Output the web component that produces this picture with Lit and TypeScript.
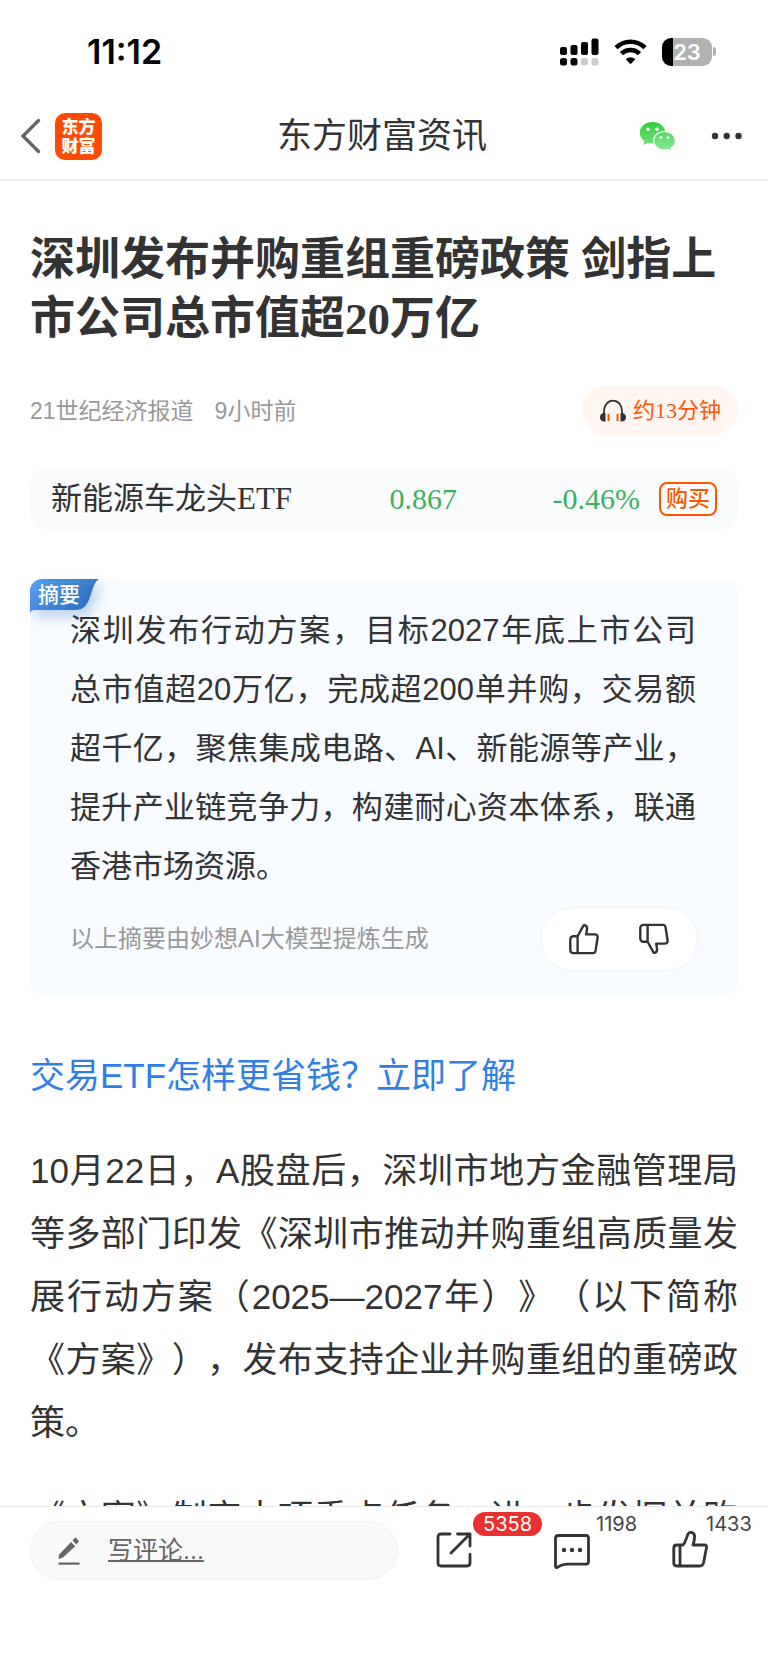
import { LitElement, html, css, svg } from "lit";
import { customElement, property } from "lit/decorators.js";

const thumb = svg`
  <path d="M10.5 14.5 16.6 3.4c.5-1 1.7-1.3 2.6-.7 1.500 1 1.900 2.600 1.600 4.300l-.9 5.500h9.600c1.900 0 3.200 1.600 2.900 3.400l-2.300 14.600c-.3 1.600-1.400 2.500-2.900 2.500H6c-2 0-3.500-1.500-3.500-3.500V18c0-2 1.500-3.500 3.500-3.500zM10.500 14.500V33"></path>`;

@customElement("status-bar")
class StatusBar extends LitElement {
  static styles = css`
    :host {
      display: flex;
      align-items: center;
      justify-content: space-between;
      height: 90px;
      padding: 13px 52px 0 87px;
      box-sizing: border-box;
      font-family: Inter, "Liberation Sans", sans-serif;
    }
    .time { font-size: 34px; line-height: 40px; font-weight: 600; color: #000; }
    .icons { display: flex; align-items: center; gap: 15px; }
    .battery {
      display: flex;
      align-items: center;
      gap: 1px;
    }
    .cell {
      width: 50px;
      height: 28px;
      border-radius: 9px;
      background: linear-gradient(90deg, #000 11px, #b1b1b1 11px);
      color: #fff;
      font-size: 22px;
      line-height: 28px;
      font-weight: 600;
      text-align: center;
    }
    .tip { width: 3px; height: 9px; border-radius: 0 4px 4px 0; background: #b1b1b1; }
  `;
  render() {
    return html`
      <span class="time">11:12</span>
      <div class="icons">
        <svg width="39" height="28" viewBox="0 0 39 28" aria-hidden="true">
          <rect x="0" y="9" width="7" height="8" rx="2"></rect>
          <rect x="10.500" y="7" width="7" height="10" rx="2"></rect>
          <rect x="21" y="4" width="7" height="13" rx="2"></rect>
          <rect x="31.500" y="0.500" width="7" height="16.500" rx="2"></rect>
          <rect x="0" y="20" width="7" height="7.500" rx="2.500"></rect>
          <rect x="10.500" y="20" width="7" height="7.500" rx="2.500"></rect>
          <rect x="21" y="20" width="7" height="7.500" rx="2.500" fill="#ccc"></rect>
          <rect x="31.500" y="20" width="7" height="7.500" rx="2.500" fill="#ccc"></rect>
        </svg>
        <svg width="33" height="26" viewBox="0 0 33 26" aria-hidden="true">
          <path d="M2 8.600a20.800 20.800 0 0 1 29 0" fill="none" stroke="#000" stroke-width="4.600"></path>
          <path d="M7.500 14.600a13 13 0 0 1 18 0" fill="none" stroke="#000" stroke-width="4.600"></path>
          <path d="M16.500 25.200 11.700 20.300a6.900 6.900 0 0 1 9.600 0z"></path>
        </svg>
        <div class="battery"><span class="cell">23</span><span class="tip"></span></div>
      </div>
    `;
  }
}

@customElement("nav-bar")
class NavBar extends LitElement {
  static styles = css`
    :host {
      display: grid;
      grid-template-columns: 1fr auto 1fr;
      align-items: center;
      height: 91px;
      padding: 3px 24px 0 20px;
      box-sizing: border-box;
      border-bottom: 2px solid #eee;
    }
    .side { display: flex; align-items: center; gap: 14px; }
    .end { justify-content: flex-end; gap: 34px; }
    button { display: flex; padding: 0; border: 0; background: none; }
    h2 { margin: 0; font-size: 35px; line-height: 48px; font-weight: 400; color: #333; }
    .logo {
      width: 47px;
      height: 47px;
      padding-top: 5px;
      box-sizing: border-box;
      border-radius: 10px;
      background: #ff4a04;
      color: #fff;
      font-size: 17px;
      line-height: 19px;
      font-weight: 900;
      text-align: center;
      text-decoration: none;
    }
  `;
  render() {
    return html`
      <div class="side">
        <button aria-label="返回">
          <svg width="21" height="36" viewBox="0 0 21 36"><path d="M18.500 2.500 3 18 18.500 33.500" fill="none" stroke="#666" stroke-width="3.400" stroke-linecap="round"></path></svg>
        </button>
        <a class="logo" href="#">东方<br />财富</a>
      </div>
      <h2>东方财富资讯</h2>
      <div class="side end">
        <button aria-label="微信">
          <svg width="37" height="30" viewBox="0 0 37 30">
            <defs><linearGradient id="wx" x1="0" y1="0" x2="0" y2="1"><stop offset="0" stop-color="#2fcf3d"></stop><stop offset="1" stop-color="#6fe07a"></stop></linearGradient>
            <linearGradient id="wy" x1="0" y1="0" x2="0" y2="1"><stop offset="0" stop-color="#58d764"></stop><stop offset="1" stop-color="#8aea94"></stop></linearGradient></defs>
            <path d="M13.500 1C6.300 1 .8 5.700.8 11.800c0 3.500 1.800 6.400 4.700 8.300L4.300 24l4.800-2.200c1.400.4 2.900.6 4.400.6 7.200 0 12.800-4.600 12.800-10.600S20.700 1 13.500 1z" fill="url(#wx)"></path>
            <path d="M25.500 10.300c-6.100 0-11 4.200-11 9.500s4.900 9.400 11 9.400c1.200 0 2.400-.2 3.500-.5l3.900 2-.9-3.500c2.700-1.700 4.400-4.400 4.400-7.400 0-5.300-4.800-9.500-10.900-9.500z" fill="url(#wy)" stroke="#fff" stroke-width="1.200"></path>
            <g fill="#fff"><circle cx="9" cy="8.200" r="1.800"></circle><circle cx="18" cy="8.200" r="1.800"></circle><circle cx="22" cy="16.600" r="1.400"></circle><circle cx="29" cy="16.600" r="1.400"></circle></g>
          </svg>
        </button>
        <button aria-label="更多">
          <svg width="34" height="10" viewBox="0 0 34 10" fill="#333"><circle cx="5" cy="5" r="3.200"></circle><circle cx="16.700" cy="5" r="3.200"></circle><circle cx="28.500" cy="5" r="3.200"></circle></svg>
        </button>
      </div>
    `;
  }
}

@customElement("summary-card")
class SummaryCard extends LitElement {
  static styles = css`
    :host {
      display: block;
      position: relative;
      margin-top: 49px;
      padding: 22px 40px 24px;
      border-radius: 14px;
      background: #f8fbff;
    }
    .tag { position: absolute; left: 0; top: 0; width: 70px; height: 34px; }
    .shape { position: absolute; left: 0; top: 0; overflow: visible; }
    .label { position: relative; display: block; padding-left: 8px; font-size: 21px; line-height: 31px; font-weight: 500; color: #fff; }
    p { margin: 0; padding-right: 2px; position: relative; font-size: 31px; line-height: 59px; text-align: justify; color: #333; }
    .foot { display: flex; align-items: center; justify-content: space-between; margin-top: 11px; }
    .note { font-size: 24px; line-height: 32px; color: #999; }
    .votes {
      display: flex;
      align-items: center;
      justify-content: space-between;
      width: 158px;
      height: 64px;
      padding: 0 27px;
      box-sizing: border-box;
      border: 1px solid #f1f2f4;
      border-radius: 32px;
      background: #fff;
    }
    button { display: flex; padding: 0; border: 0; background: none; }
    .down { transform: scaleY(-1); }
  `;
  render() {
    return html`
      <div class="tag">
        <svg class="shape" width="70" height="34" viewBox="0 0 70 34" aria-hidden="true">
          <defs>
            <linearGradient id="tg" x1="0" y1="0" x2="1" y2="0.500"><stop offset="0" stop-color="#5b9ff0"></stop><stop offset="1" stop-color="#2e6fc0"></stop></linearGradient>
            <filter id="sh" x="-20%" y="-20%" width="160%" height="200%"><feDropShadow dx="5" dy="7" stdDeviation="6" flood-color="#3a7bd0" flood-opacity="0.300"></feDropShadow></filter>
          </defs>
          <path d="M0 34V12A12 12 0 0 1 12 0H69C64 3 63 10 60 18 57 27 53 31 45 31H5Q1 31 0 34z" fill="url(#tg)" filter="url(#sh)"></path>
        </svg>
        <span class="label">摘要</span>
      </div>
      <p>深圳发布行动方案，目标2027年底上市公司总市值超20万亿，完成超200单并购，交易额超千亿，聚焦集成电路、AI、新能源等产业，提升产业链竞争力，构建耐心资本体系，联通香港市场资源。</p>
      <div class="foot">
        <span class="note">以上摘要由妙想AI大模型提炼生成</span>
        <div class="votes">
          <button aria-label="赞"><svg width="32" height="32" viewBox="0 0 35 35" fill="none" stroke="#333" stroke-width="2.600" stroke-linejoin="round">${thumb}</svg></button>
          <button aria-label="踩"><svg class="down" width="32" height="32" viewBox="0 0 35 35" fill="none" stroke="#333" stroke-width="2.600" stroke-linejoin="round">${thumb}</svg></button>
        </div>
      </div>
    `;
  }
}

@customElement("action-button")
class ActionButton extends LitElement {
  @property() name = "";
  @property() count = "";
  @property() variant = "";
  static styles = css`
    :host { display: block; }
    button { position: relative; display: flex; padding: 0; border: 0; background: none; }
    .count {
      position: absolute;
      left: 42px;
      top: -19px;
      color: #444;
      font: 400 20px/24px Inter, "Liberation Sans", sans-serif;
    }
    .hot { left: 37px; padding: 0 10px; border-radius: 12px; background: #e93030; color: #fff; }
    .near { left: 34px; }
  `;
  render() {
    return html`<button aria-label=${this.name}><slot></slot><span class="count ${this.variant}">${this.count}</span></button>`;
  }
}

@customElement("comment-bar")
class CommentBar extends LitElement {
  static styles = css`
    :host {
      display: flex;
      align-items: flex-start;
      gap: 38px;
      height: 157px;
      padding: 14px 60px 0 30px;
      box-sizing: border-box;
      border-top: 1px solid #ebebeb;
      background: #fff;
      flex: none;
    }
    .field {
      flex: 1;
      min-width: 0;
      display: flex;
      align-items: center;
      gap: 28px;
      height: 59px;
      padding: 0 27px;
      box-sizing: border-box;
      border: 1px solid #f0f0f0;
      border-radius: 30px;
      background: #f9f9f9;
    }
    .field svg { flex: none; }
    input {
      flex: 1;
      min-width: 0;
      padding: 0;
      border: 0;
      outline: 0;
      background: none;
      height: 40px;
      font-family: inherit;
      font-size: 25px;
      color: #333;
    }
    input::placeholder { color: #666; opacity: 1; text-decoration: underline 2px; }
    .actions { display: flex; gap: 82px; padding-top: 10px; }
  `;
  render() {
    return html`
      <label class="field">
        <svg width="22" height="30" viewBox="0 0 22 30" fill="#666" aria-hidden="true">
          <path d="M0.500 23 1.200 18.400 13 6 17.200 10.200 5 21.600z"></path>
          <path d="M14.500 4.600 17.300 1.200 21 5.200 18.300 8.600z"></path>
          <rect x="0.500" y="26.500" width="21" height="2.200"></rect>
        </svg>
        <input type="text" placeholder="写评论..." aria-label="写评论" />
      </label>
      <div class="actions">
        <action-button name="分享" count="5358" variant="hot">
          <svg width="36" height="38" viewBox="0 0 36 38" fill="none" stroke="#333" stroke-width="2.800" stroke-linecap="round" stroke-linejoin="round">
            <path d="M14 3H5Q2 3 2 6V32Q2 35 5 35H31Q34 35 34 32V23.500M21.500 3H34V15M33.500 3.500 15 22"></path>
          </svg>
        </action-button>
        <action-button name="评论" count="1198">
          <svg width="36" height="38" viewBox="0 0 36 38" fill="none" stroke="#333" stroke-width="2.800" stroke-linejoin="round">
            <path d="M4.500 4.500H32Q34.500 4.500 34.500 7.200V30.500Q34.500 33.200 32 33.200H12.500C8 33.200 6 34.500 3 36.500Q1.500 37 1.500 35V7.500Q1.500 4.500 4.500 4.500z"></path>
            <g fill="#333" stroke="none"><circle cx="10" cy="19" r="2.200"></circle><circle cx="18" cy="19" r="2.200"></circle><circle cx="26" cy="19" r="2.200"></circle></g>
          </svg>
        </action-button>
        <action-button name="点赞" count="1433" variant="near">
          <svg width="36" height="38" viewBox="0 0 36 38" fill="none" stroke="#333" stroke-width="2.800" stroke-linejoin="round">
            <path d="M11 14C14 11 14.500 6 16 3 17.500.5 22.500.8 22.600 5.200 22.600 8.500 22 11 21 14H32.500Q35 14 34.500 16.500L31.500 32Q30.700 35 28 35H5Q1.800 35 1.800 32V17Q1.800 14 5 14zM8 14V35"></path>
          </svg>
        </action-button>
      </div>
    `;
  }
}

@customElement("app-root")
class AppRoot extends LitElement {
  static styles = css`
    :host {
      display: flex;
      flex-direction: column;
      height: 100vh;
      overflow: hidden;
      background: #fff;
      color: #333;
      font-family: "Liberation Sans", "Noto Sans CJK SC", sans-serif;
      text-spacing-trim: space-all;
    }
    status-bar, nav-bar { flex: none; }
    article { flex: 1; min-height: 0; overflow: hidden; padding: 50px 30px 0; }
    h1, .quote, .listen { font-family: "Liberation Serif", "Noto Sans CJK SC", serif; }
    h1 { margin: 0; font-size: 45px; line-height: 59px; font-weight: 700; }
    .meta { display: flex; align-items: center; gap: 21px; margin-top: 37px; font-size: 23px; line-height: 32px; color: #999; }
    .listen {
      display: flex;
      align-items: center;
      gap: 6px;
      height: 49px;
      margin-left: auto;
      padding: 0 17px;
      border: 0;
      border-radius: 25px;
      background: #fff5f1;
      color: #ff5500;
      font-size: 22px;
      line-height: 32px;
    }
    .quote {
      display: grid;
      grid-template-columns: 1fr auto 183px auto;
      align-items: center;
      height: 63px;
      margin-top: 32px;
      padding: 0 21px;
      border-radius: 18px;
      background: #fafbfd;
      font-size: 31px;
      line-height: 40px;
    }
    .num { color: #3bb15e; text-align: right; font-size: 30px; }
    .buy {
      height: 34px;
      margin-left: 19px;
      padding: 0 5px;
      border: 2px solid #ff5500;
      border-radius: 8px;
      background: #fff;
      color: #ff5500;
      font: 500 22px/28px "Liberation Sans", "Noto Sans CJK SC", sans-serif;
    }
    .promo { display: block; margin-top: 49px; font-size: 35px; line-height: 63px; color: #2f7fe6; text-decoration: none; }
    .text { margin: 32px 0 0; font-size: 35px; line-height: 63px; text-align: justify; }
    .full { text-align-last: justify; }
  `;
  render() {
    return html`
      <status-bar></status-bar>
      <nav-bar></nav-bar>
      <article lang="zh-CN">
        <h1>深圳发布并购重组重磅政策 剑指上市公司总市值超20万亿</h1>
        <div class="meta">
          <span>21世纪经济报道</span><span>9小时前</span>
          <button class="listen">
            <svg width="28" height="24" viewBox="0 0 28 24" aria-hidden="true">
              <path d="M5 15V11.500a9 9.800 0 0 1 18 0V15" fill="none" stroke="#333" stroke-width="1.800"></path>
              <path d="M6.500 14v8.500H5.500C2.500 22.500 1 20.500 1 18.200S2.500 14 5.500 14zM21.500 14v8.500h1c3 0 4.500-2 4.500-4.300S25.500 14 22.500 14z" fill="#333"></path>
              <path d="M9.500 15v7M18.500 15v7" stroke="#ff5500" stroke-width="2"></path>
            </svg>
            约13分钟
          </button>
        </div>
        <div class="quote">
          <span>新能源车龙头ETF</span>
          <span class="num">0.867</span>
          <span class="num">-0.46%</span>
          <button class="buy">购买</button>
        </div>
        <summary-card></summary-card>
        <a class="promo" href="#">交易ETF怎样更省钱？立即了解</a>
        <p class="text">10月22日，A股盘后，深圳市地方金融管理局等多部门印发《深圳市推动并购重组高质量发展行动方案（2025—2027年）》（以下简称《方案》），发布支持企业并购重组的重磅政策。</p>
        <p class="text full">《方案》制定十项重点任务，进一步发挥并购</p>
      </article>
      <comment-bar></comment-bar>
    `;
  }
}
